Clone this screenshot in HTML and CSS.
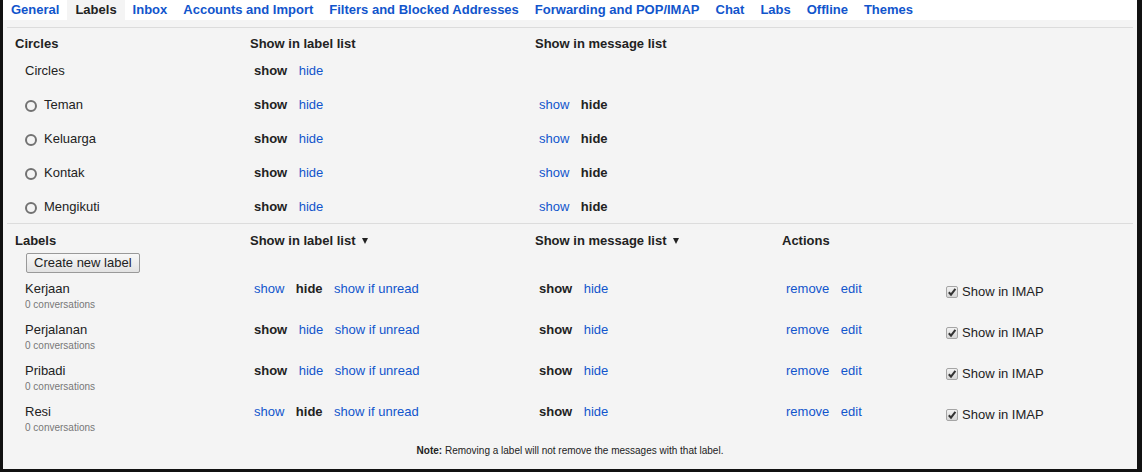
FILE: index.html
```html
<!DOCTYPE html>
<html>
<head>
<meta charset="utf-8">
<link rel="stylesheet" href="styles.css">
</head>
<body>
<div class="panel">
  <nav class="tabs">
    <a class="tab">General</a>
    <span class="tab active">Labels</span>
    <a class="tab">Inbox</a>
    <a class="tab">Accounts and Import</a>
    <a class="tab">Filters and Blocked Addresses</a>
    <a class="tab">Forwarding and POP/IMAP</a>
    <a class="tab">Chat</a>
    <a class="tab">Labs</a>
    <a class="tab">Offline</a>
    <a class="tab">Themes</a>
  </nav>
  <div class="content">
    <section class="sec circles">
      <div class="row head">
        <div>Circles</div>
        <div>Show in label list</div>
        <div>Show in message list</div>
      </div>
      <div class="row crow top">
        <div class="cname">Circles</div>
        <div class="opts"><b>show</b><a>hide</a></div>
        <div></div>
      </div>
      <div class="row crow">
        <div class="cname"><span class="ring"></span>Teman</div>
        <div class="opts"><b>show</b><a>hide</a></div>
        <div class="opts"><a>show</a><b>hide</b></div>
      </div>
      <div class="row crow">
        <div class="cname"><span class="ring"></span>Keluarga</div>
        <div class="opts"><b>show</b><a>hide</a></div>
        <div class="opts"><a>show</a><b>hide</b></div>
      </div>
      <div class="row crow">
        <div class="cname"><span class="ring"></span>Kontak</div>
        <div class="opts"><b>show</b><a>hide</a></div>
        <div class="opts"><a>show</a><b>hide</b></div>
      </div>
      <div class="row crow">
        <div class="cname"><span class="ring"></span>Mengikuti</div>
        <div class="opts"><b>show</b><a>hide</a></div>
        <div class="opts"><a>show</a><b>hide</b></div>
      </div>
    </section>

    <section class="sec labels">
      <div class="row head lhead">
        <div>Labels</div>
        <div>Show in label list <span class="tri"></span></div>
        <div>Show in message list <span class="tri"></span></div>
        <div>Actions</div>
      </div>
      <div class="btnrow"><button class="btn">Create new label</button></div>

      <div class="row lrow">
        <div class="lname"><div>Kerjaan</div><div class="count">0 conversations</div></div>
        <div class="opts"><a>show</a><b>hide</b><a>show if unread</a></div>
        <div class="opts"><b>show</b><a>hide</a></div>
        <div class="opts"><a>remove</a><a>edit</a></div>
        <div class="imap"><span class="cb"><svg width="10" height="10" viewBox="0 0 10 10"><path d="M1.8 5.2 L4 7.6 L8.4 1.8" fill="none" stroke="#333" stroke-width="2"/></svg></span>Show in IMAP</div>
      </div>
      <div class="row lrow">
        <div class="lname"><div>Perjalanan</div><div class="count">0 conversations</div></div>
        <div class="opts"><b>show</b><a>hide</a><a>show if unread</a></div>
        <div class="opts"><b>show</b><a>hide</a></div>
        <div class="opts"><a>remove</a><a>edit</a></div>
        <div class="imap"><span class="cb"><svg width="10" height="10" viewBox="0 0 10 10"><path d="M1.8 5.2 L4 7.6 L8.4 1.8" fill="none" stroke="#333" stroke-width="2"/></svg></span>Show in IMAP</div>
      </div>
      <div class="row lrow">
        <div class="lname"><div>Pribadi</div><div class="count">0 conversations</div></div>
        <div class="opts"><b>show</b><a>hide</a><a>show if unread</a></div>
        <div class="opts"><b>show</b><a>hide</a></div>
        <div class="opts"><a>remove</a><a>edit</a></div>
        <div class="imap"><span class="cb"><svg width="10" height="10" viewBox="0 0 10 10"><path d="M1.8 5.2 L4 7.6 L8.4 1.8" fill="none" stroke="#333" stroke-width="2"/></svg></span>Show in IMAP</div>
      </div>
      <div class="row lrow">
        <div class="lname"><div>Resi</div><div class="count">0 conversations</div></div>
        <div class="opts"><a>show</a><b>hide</b><a>show if unread</a></div>
        <div class="opts"><b>show</b><a>hide</a></div>
        <div class="opts"><a>remove</a><a>edit</a></div>
        <div class="imap"><span class="cb"><svg width="10" height="10" viewBox="0 0 10 10"><path d="M1.8 5.2 L4 7.6 L8.4 1.8" fill="none" stroke="#333" stroke-width="2"/></svg></span>Show in IMAP</div>
      </div>
      <p class="note"><b>Note:</b> Removing a label will not remove the messages with that label.</p>
    </section>
  </div>
</div>
</body>
</html>
```

FILE: styles.css
```css
* { box-sizing: border-box; }
html, body { margin: 0; padding: 0; }
body {
  background: #111;
  font-family: "Liberation Sans", Arial, sans-serif;
  font-size: 13px;
  color: #222;
  padding: 0 5px 3px 3px;
  width: 1142px;
  height: 472px;
}
.panel {
  width: 1134px;
  height: 469px;
  background: #f4f4f4;
  display: flex;
  flex-direction: column;
}
.tabs {
  display: flex;
  height: 20px;
  background: #fff;
}
.tab {
  padding: 0 8px;
  line-height: 20px;
  font-weight: bold;
  color: #15c;
  white-space: nowrap;
}
.tab.active {
  background: #f4f4f4;
  color: #222;
}
.content {
  flex: 1;
  padding-top: 7px;
}
.sec {
  margin: 0 4px;
  border-top: 1px solid #dcdcdc;
}
.row {
  display: grid;
  grid-template-columns: 235px 285px 247px 164px 1fr;
  padding-left: 8px;
  line-height: 16px;
}
.head {
  font-weight: bold;
  height: 30px;
  padding-top: 8px;
}
.crow { height: 34px; padding-top: 10px; }
.crow.top { height: 29px; padding-top: 5px; }
.cname {
  padding-left: 10px;
  display: flex;
  align-items: center;
  height: 16px;
}
.ring {
  width: 12px;
  height: 12px;
  border: 2px solid #727272;
  border-radius: 50%;
  margin-right: 7px;
  margin-top: 1px;
}
.opts {
  display: flex;
  gap: 11.5px;
  padding-left: 4px;
  white-space: nowrap;
}
.opts a { color: #15c; }
.opts b { color: #222; }
.lhead { height: 29px; padding-top: 9px; }
.tri {
  display: inline-block;
  width: 0;
  height: 0;
  border-left: 3px solid transparent;
  border-right: 3px solid transparent;
  border-top: 6px solid #222;
  margin-left: 3px;
  vertical-align: 1px;
}
.btnrow {
  height: 20px;
  padding-left: 19px;
}
.btn {
  height: 20px;
  padding: 0 7px;
  font-family: "Liberation Sans", Arial, sans-serif;
  font-size: 13px;
  color: #222;
  border: 1px solid #999;
  border-radius: 2px;
  background: linear-gradient(#f8f8f8, #e2e2e2);
  line-height: 18px;
}
.lrow { height: 41px; padding-top: 8px; }
.lname { padding-left: 10px; }
.count {
  font-size: 10px;
  line-height: 12px;
  margin-top: 2px;
  color: #777;
}
.imap {
  display: flex;
  align-items: center;
  padding-top: 3px;
  height: 19px;
  white-space: nowrap;
}
.cb {
  width: 12px;
  height: 12px;
  border: 1px solid #a5a5a5;
  border-radius: 2px;
  background: linear-gradient(#f2f2f2, #d6d6d6);
  margin-right: 4px;
  margin-top: -1px;
  display: flex;
  align-items: center;
  justify-content: center;
}
.cb svg { display: block; }
.note {
  margin: 0;
  padding-top: 8px;
  font-size: 10px;
  line-height: 12px;
  text-align: center;
}
```
